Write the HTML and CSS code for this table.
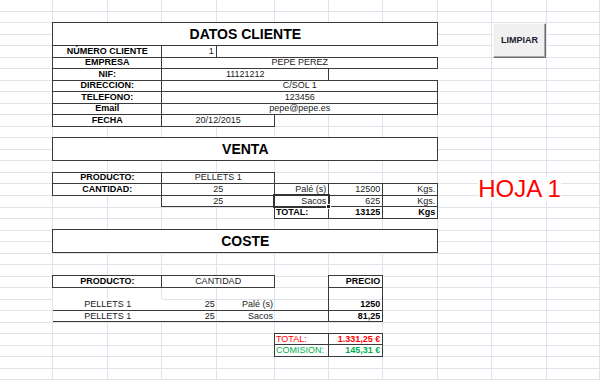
FILE: index.html
```html
<!DOCTYPE html>
<html lang="es">
<head>
<meta charset="utf-8">
<title>Hoja 1</title>
<link rel="stylesheet" href="styles.css">
</head>
<body>
<div class="sheet">
  <div class="gc c1"></div><div class="gc c2"></div><div class="gc c3"></div><div class="gc c4"></div>
  <div class="gc c5"></div><div class="gc c6"></div><div class="gc c7"></div><div class="gc c8"></div>
  <div class="gc c9"></div><div class="gc c10"></div><div class="gc c11"></div>

  <!-- merged blank areas -->
  <div class="blank x5-9 r5"></div>
  <div class="blank x7-9 r7"></div>

  <!-- DATOS CLIENTE -->
  <div class="cell b title x2-9 r3-5">DATOS CLIENTE</div>
  <div class="cell b bold center x2-4 r5">NÚMERO CLIENTE</div>
  <div class="cell b right x4-5 r5">1</div>
  <div class="cell b bold center x2-4 r6">EMPRESA</div>
  <div class="cell b center x4-9 r6">PEPE PEREZ</div>
  <div class="cell b bold center x2-4 r7">NIF:</div>
  <div class="cell b center x4-7 r7">11121212</div>
  <div class="cell b bold center x2-4 r8">DIRECCION:</div>
  <div class="cell b center x4-9 r8">C/SOL 1</div>
  <div class="cell b bold center x2-4 r9">TELEFONO:</div>
  <div class="cell b center x4-9 r9">123456</div>
  <div class="cell b bold center x2-4 r10">Email</div>
  <div class="cell b center x4-9 r10">pepe@pepe.es</div>
  <div class="cell b bold center x2-4 r11">FECHA</div>
  <div class="cell b center x4-6 r11">20/12/2015</div>

  <button class="btn">LIMPIAR</button>

  <!-- VENTA -->
  <div class="cell b title x2-9 r13-15">VENTA</div>
  <div class="cell b bold center x2-4 r16">PRODUCTO:</div>
  <div class="cell b center x4-6 r16">PELLETS 1</div>
  <div class="cell b bold center x2-4 r17">CANTIDAD:</div>
  <div class="cell b center x4-6 r17">25</div>
  <div class="cell b right x6-7 r17">Palé (s)</div>
  <div class="cell b right x7-8 r17">12500</div>
  <div class="cell b right x8-9 r17">Kgs.</div>
  <div class="cell b center x4-6 r18">25</div>
  <div class="cell b right x7-8 r18">625</div>
  <div class="cell b right x8-9 r18">Kgs.</div>
  <div class="cell b bold left x6-7 r19">TOTAL:</div>
  <div class="cell b bold right x7-8 r19">13125</div>
  <div class="cell b bold right x8-9 r19">Kgs</div>
  <div class="cell b sel right x6-7 r18">Sacos</div>

  <div class="hoja"><span>HOJA 1</span></div>

  <!-- COSTE -->
  <div class="cell b title x2-9 r21-23">COSTE</div>
  <div class="cell b bold center x2-4 r25">PRODUCTO:</div>
  <div class="cell b center x4-6 r25">CANTIDAD</div>
  <div class="cell b bold right x7-8 r25">PRECIO</div>
  <div class="cell sides x7-8 r26"></div>

  <div class="cell under fill center x2-4 r27">PELLETS 1</div>
  <div class="cell under right x4-5 r27">25</div>
  <div class="cell under right x5-6 r27">Palé (s)</div>
  <div class="cell under x6-7 r27"></div>
  <div class="cell sides under bold right x7-8 r27">1250</div>

  <div class="cell under fill center x2-4 r28">PELLETS 1</div>
  <div class="cell under right x4-5 r28">25</div>
  <div class="cell under right x5-6 r28">Sacos</div>
  <div class="cell under x6-7 r28"></div>
  <div class="cell sides under bold right x7-8 r28">81,25</div>

  <div class="cell b red left x6-7 r30">TOTAL:</div>
  <div class="cell b red bold right x7-8 r30">1.331,25 €</div>
  <div class="cell b green left x6-7 r31">COMISION:</div>
  <div class="cell b green bold right x7-8 r31">145,31 €</div>
</div>
</body>
</html>
```

FILE: styles.css
```css
html, body {
  margin: 0;
  padding: 0;
  background: #ffffff;
}

body {
  width: 600px;
  height: 380px;
  overflow: hidden;
  font-family: "Liberation Sans", Arial, sans-serif;
}

.sheet {
  display: grid;
  grid-template-columns: 53.3px 55px 54px 54.4px 58.3px 54.3px 54px 55px 54px 54.4px 53.3px;
  grid-template-rows: repeat(33, 11.53px);
  background: repeating-linear-gradient(to bottom, transparent 0 10.53px, #dfe3eb 10.53px 11.53px);
  font-size: 9px;
  color: #1a1a1a;
}

/* column gridlines */
.gc { grid-row: 1 / -1; border-right: 1px solid #dfe3eb; }
.c1 { grid-column: 1; } .c2 { grid-column: 2; } .c3 { grid-column: 3; } .c4 { grid-column: 4; }
.c5 { grid-column: 5; } .c6 { grid-column: 6; } .c7 { grid-column: 7; } .c8 { grid-column: 8; }
.c9 { grid-column: 9; } .c10 { grid-column: 10; } .c11 { grid-column: 11; }

/* placement */
.x2-9 { grid-column: 2 / 9; }
.x2-4 { grid-column: 2 / 4; }
.x4-5 { grid-column: 4 / 5; }
.x4-6 { grid-column: 4 / 6; }
.x4-7 { grid-column: 4 / 7; }
.x4-9 { grid-column: 4 / 9; }
.x5-6 { grid-column: 5 / 6; }
.x5-9 { grid-column: 5 / 9; }
.x6-7 { grid-column: 6 / 7; }
.x7-8 { grid-column: 7 / 8; }
.x7-9 { grid-column: 7 / 9; }
.x8-9 { grid-column: 8 / 9; }

.r3-5 { grid-row: 3 / 5; }
.r5 { grid-row: 5; } .r6 { grid-row: 6; } .r7 { grid-row: 7; } .r8 { grid-row: 8; }
.r9 { grid-row: 9; } .r10 { grid-row: 10; } .r11 { grid-row: 11; }
.r13-15 { grid-row: 13 / 15; }
.r16 { grid-row: 16; } .r17 { grid-row: 17; } .r18 { grid-row: 18; } .r19 { grid-row: 19; }
.r21-23 { grid-row: 21 / 23; }
.r25 { grid-row: 25; } .r26 { grid-row: 26; } .r27 { grid-row: 27; } .r28 { grid-row: 28; }
.r30 { grid-row: 30; } .r31 { grid-row: 31; }

/* cells */
.blank { background: #fff; }

.cell {
  display: flex;
  align-items: center;
  padding: 0 2px;
  white-space: nowrap;
  min-width: 0;
  line-height: 1;
}

.b {
  border: 1px solid #3a3a3a;
  margin: -1px 0 0 -1px;
  background: #fff;
}

.under { border-bottom: 1px solid #3a3a3a; }
.sides { border-left: 1px solid #3a3a3a; border-right: 1px solid #3a3a3a; margin-left: -1px; }
.fill { background: #fff; }

.center { justify-content: center; }
.right { justify-content: flex-end; }
.left { justify-content: flex-start; padding-left: 1px; }
.bold { font-weight: bold; color: #000; }

.title {
  justify-content: center;
  font-size: 14px;
  font-weight: bold;
  color: #000;
}

.red { color: #ff0000; }
.green { color: #00b050; }

.sel {
  position: relative;
  z-index: 1;
  border: 2px solid #333;
  margin: -2px -1px -1px -2px;
}
.sel::after {
  content: "";
  position: absolute;
  right: -3px;
  bottom: -3px;
  width: 3px;
  height: 3px;
  background: #222;
  border: 1px solid #fff;
}

.hoja {
  grid-column: 10 / 11;
  grid-row: 16 / 18;
  display: flex;
  justify-content: center;
  align-items: flex-end;
  margin-bottom: -5px;
  font-size: 24px;
  line-height: 24px;
  color: #ff0000;
  white-space: nowrap;
}
.hoja span { background: #fff; }

.btn {
  grid-column: 10 / 11;
  grid-row: 3 / 6;
  margin: 0 1px;
  padding: 0;
  background: #f0f0f0;
  border: 1px solid;
  border-color: #fbfbfb #6e6e6e #6e6e6e #fbfbfb;
  box-shadow: inset -1px -1px 0 #a8a8a8;
  font-family: "Liberation Sans", Arial, sans-serif;
  font-size: 9px;
  font-weight: bold;
  color: #1b1b2e;
}
```
